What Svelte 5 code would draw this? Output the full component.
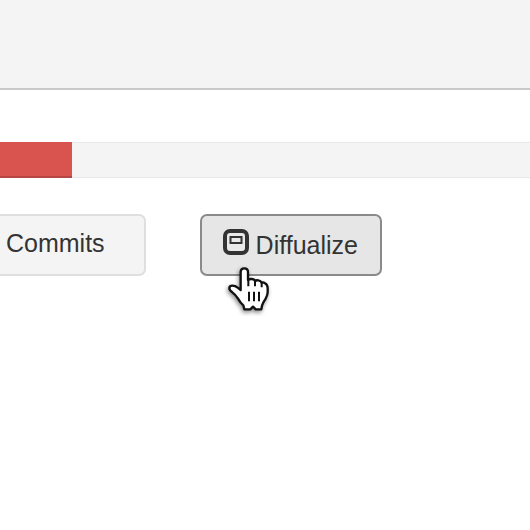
<script>
  const progress = 72;
</script>

<div class="page">
  <header></header>
  <div class="track" role="progressbar" aria-label="Diff size" aria-valuenow={progress}>
    <div class="fill" style="width: {progress}px"></div>
  </div>
  <div class="actions">
    <button class="btn commits" type="button">Commits</button>
    <button class="btn active" type="button">
      <svg class="icon" viewBox="0 0 26 26" aria-hidden="true">
        <rect x="2" y="2" width="22" height="22" rx="5" fill="#e9e9e9" stroke="#333" stroke-width="4" />
        <rect x="7.5" y="8" width="11" height="6" fill="none" stroke="#333" stroke-width="2" />
      </svg>
      <span>Diffualize</span>
      <svg class="cursor" viewBox="0 0 180 180" aria-hidden="true">
        <path
          d="M62 90V36Q62 25 73 25Q84 25 84 36V60Q87 57 94 57Q103 57 105 63Q109 60 115 61Q122 62 125 68Q130 66 135 70Q143 75 143 84V97Q143 105 137 116Q129 128 126 137L124 148H107L99 140L91 148H73L70 136Q62 130 54 116Q47 104 37 97Q28 91 28 84Q29 77 37 77Q46 77 53 83Z"
          fill="#fff" stroke="#111" stroke-width="7" stroke-linejoin="round" />
        <path d="M85 58V79M105 62V79M125 68V82M87 95V124M102 95V124M117 95V124" fill="none" stroke="#111" stroke-width="6" />
      </svg>
    </button>
  </div>
</div>

<style>
  :global(body) {
    margin: 0;
    background: #fff;
  }
  .page {
    overflow: hidden;
    font-family: "Liberation Sans", Arial, sans-serif;
    color: #333;
  }
  header {
    height: 88px;
    background: #f4f4f4;
    border-bottom: 2px solid #c9c9c9;
  }
  .track {
    box-sizing: border-box;
    height: 36px;
    margin-top: 52px;
    background: #f4f4f4;
    box-shadow: inset 0 1px #e8e8e8, inset 0 -1px #e8e8e8;
  }
  .fill {
    box-sizing: border-box;
    height: 36px;
    background: #d9534f;
    border-bottom: 2px solid #b54643;
  }
  .actions {
    display: flex;
    gap: 54px;
    margin: 36px 0 48px -20px;
  }
  .btn {
    box-sizing: border-box;
    position: relative;
    display: flex;
    align-items: center;
    height: 62px;
    padding: 0 22px 0 21px;
    border: 2px solid #dfdfdf;
    border-radius: 7px;
    background: #f4f4f4;
    color: #333;
    font-family: inherit;
    font-size: 25px;
    line-height: 30px;
    white-space: nowrap;
  }
  .commits {
    padding: 0 39px 4px 24px;
  }
  .active {
    background: #e6e6e6;
    border-color: #8a8a8a;
  }
  .icon {
    width: 26px;
    height: 26px;
    margin: 0 7px 7px 0;
  }
  .cursor {
    position: absolute;
    left: 18px;
    top: 44px;
    width: 60px;
    height: 60px;
    filter: drop-shadow(-1px 2px 2px rgba(0, 0, 0, 0.45));
  }
</style>
